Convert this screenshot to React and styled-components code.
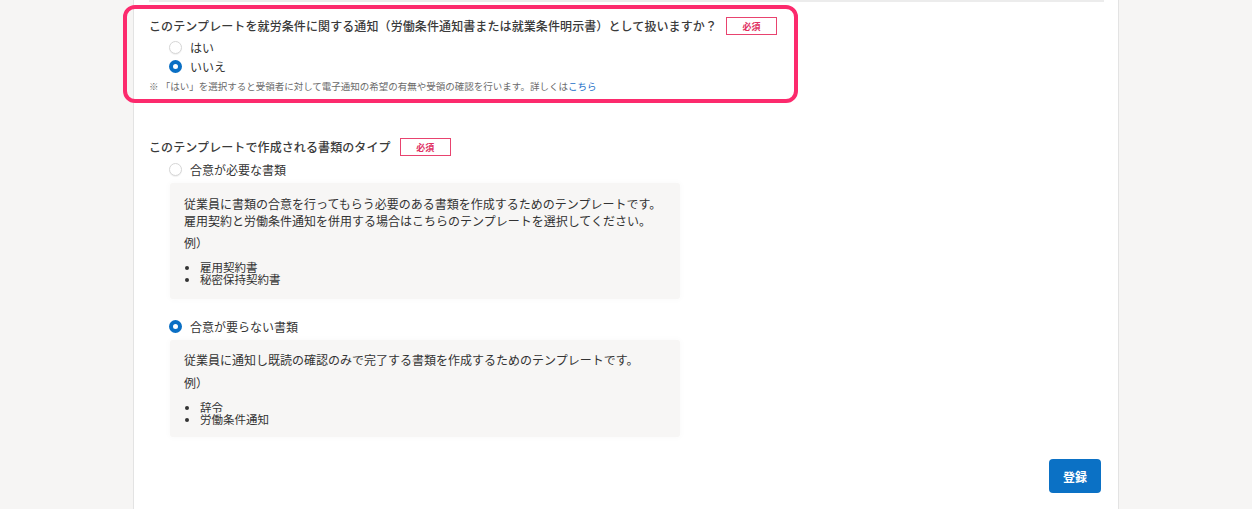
import styled, { createGlobalStyle } from "styled-components";

const Global = createGlobalStyle`
  html, body {
    margin: 0;
    background: #f6f5f4;
  }
  body {
    font-family: "Noto Sans CJK JP", "Noto Sans", sans-serif;
    color: #333;
  }
`;

const Page = styled.div`
  display: flex;
  justify-content: center;
  min-height: 100vh;
`;

const Panel = styled.main`
  width: 955px;
  min-height: 100vh;
  padding: 0 14px 0 15px;
  background: #fff;
  border-left: 1px solid #e3e3e3;
  border-right: 1px solid #e3e3e3;
  box-sizing: content-box;
`;

const Divider = styled.div`
  height: 2px;
  background: #ececec;
`;

const Field = styled.section`
  position: relative;
  margin-top: ${(p) => p.$top}px;
`;

const Highlight = styled.div`
  position: absolute;
  left: -26px;
  top: -12px;
  width: 667px;
  height: 90px;
  border: 4px solid #fc2a6d;
  border-radius: 12px;
  pointer-events: none;
`;

const TitleRow = styled.div`
  display: flex;
  align-items: center;
  gap: 9px;
  height: 18px;
`;

const Title = styled.h3`
  margin: 0;
  font-size: 12px;
  font-weight: 500;
  letter-spacing: 0.1px;
  line-height: 18px;
  color: #3a3a3a;
`;

const Required = styled.span`
  display: inline-flex;
  align-items: center;
  justify-content: center;
  width: 49px;
  height: 16px;
  border: 1px solid #e8436f;
  color: #e03163;
  font-size: 9px;
  font-weight: 700;
`;

const Options = styled.div`
  display: flex;
  flex-direction: column;
  margin-top: ${(p) => p.$top || 0}px;
  padding-left: 20px;
`;

const Option = styled.label`
  display: flex;
  align-items: center;
  gap: 8px;
  height: 19px;
  font-size: 12px;
  color: #333;
  margin-top: ${(p) => p.$top || 0}px;
`;

const Radio = styled.span`
  width: 13px;
  height: 13px;
  border-radius: 50%;
  box-sizing: border-box;
  flex: none;
  background: #fff;
  border: ${(p) => (p.$checked ? "4px solid #0a6fc4" : "1px solid #d6d6d6")};
  box-shadow: ${(p) => (p.$checked ? "none" : "0 1px 1px rgba(0,0,0,0.06)")};
`;

const Note = styled.p`
  margin: 3px 0 0;
  font-size: 9.5px;
  line-height: 14px;
  color: #6a6a6a;
  white-space: nowrap;
`;

const Link = styled.a`
  color: #1b6fc8;
  text-decoration: none;
`;

const Description = styled.div`
  width: 482px;
  margin: 4px 0 0 1px;
  padding: ${(p) => p.$pad}px 14px ${(p) => p.$bottom}px;
  background: #f7f6f5;
  border-radius: 3px;
  box-shadow: 0 0 6px 1px rgba(0, 0, 0, 0.025);
  font-size: 12px;
  line-height: 17px;
  color: #333;
`;

const Text = styled.p`
  margin: 0;
`;

const Example = styled.p`
  margin: ${(p) => p.$top}px 0 0;
`;

const Bullets = styled.ul`
  margin: 10px 0 0;
  padding: 0 0 0 16px;
  list-style: disc;

  li {
    font-size: 11.5px;
    line-height: 12px;
  }

  li::marker {
    font-size: 10px;
  }
`;

const Footer = styled.div`
  display: flex;
  justify-content: flex-end;
  padding: 22px 3px 0 0;
`;

const Button = styled.button`
  width: 52px;
  height: 34px;
  border: none;
  border-radius: 4px;
  background: #0b71c5;
  color: #fff;
  font-family: inherit;
  font-size: 12px;
  font-weight: 700;
`;

const App = () => {
  return (
    <>
      <Global />
      <Page>
        <Panel>
          <Divider />
          <Field $top={15}>
            <Highlight />
            <TitleRow>
              <Title>
                このテンプレートを就労条件に関する通知（労働条件通知書または就業条件明示書）として扱いますか？
              </Title>
              <Required>必須</Required>
            </TitleRow>
            <Options $top={3}>
              <Option>
                <Radio />
                はい
              </Option>
              <Option>
                <Radio $checked />
                いいえ
              </Option>
            </Options>
            <Note>
              ※ 「はい」を選択すると受領者に対して電子通知の希望の有無や受領の確認を行います。詳しくは
              <Link href="#">こちら</Link>
            </Note>
          </Field>

          <Field $top={45}>
            <TitleRow>
              <Title>このテンプレートで作成される書類のタイプ</Title>
              <Required>必須</Required>
            </TitleRow>
            <Options $top={4}>
              <Option>
                <Radio />
                合意が必要な書類
              </Option>
              <Description $pad={12} $bottom={14}>
                <Text>
                  従業員に書類の合意を行ってもらう必要のある書類を作成するためのテンプレートです。
                  <br />
                  雇用契約と労働条件通知を併用する場合はこちらのテンプレートを選択してください。
                </Text>
                <Example $top={5}>例）</Example>
                <Bullets>
                  <li>雇用契約書</li>
                  <li>秘密保持契約書</li>
                </Bullets>
              </Description>
              <Option $top={18}>
                <Radio $checked />
                合意が要らない書類
              </Option>
              <Description $pad={11} $bottom={12}>
                <Text>
                  従業員に通知し既読の確認のみで完了する書類を作成するためのテンプレートです。
                </Text>
                <Example $top={6}>例）</Example>
                <Bullets>
                  <li>辞令</li>
                  <li>労働条件通知</li>
                </Bullets>
              </Description>
            </Options>
          </Field>

          <Footer>
            <Button>登録</Button>
          </Footer>
        </Panel>
      </Page>
    </>
  );
};

export default App;
